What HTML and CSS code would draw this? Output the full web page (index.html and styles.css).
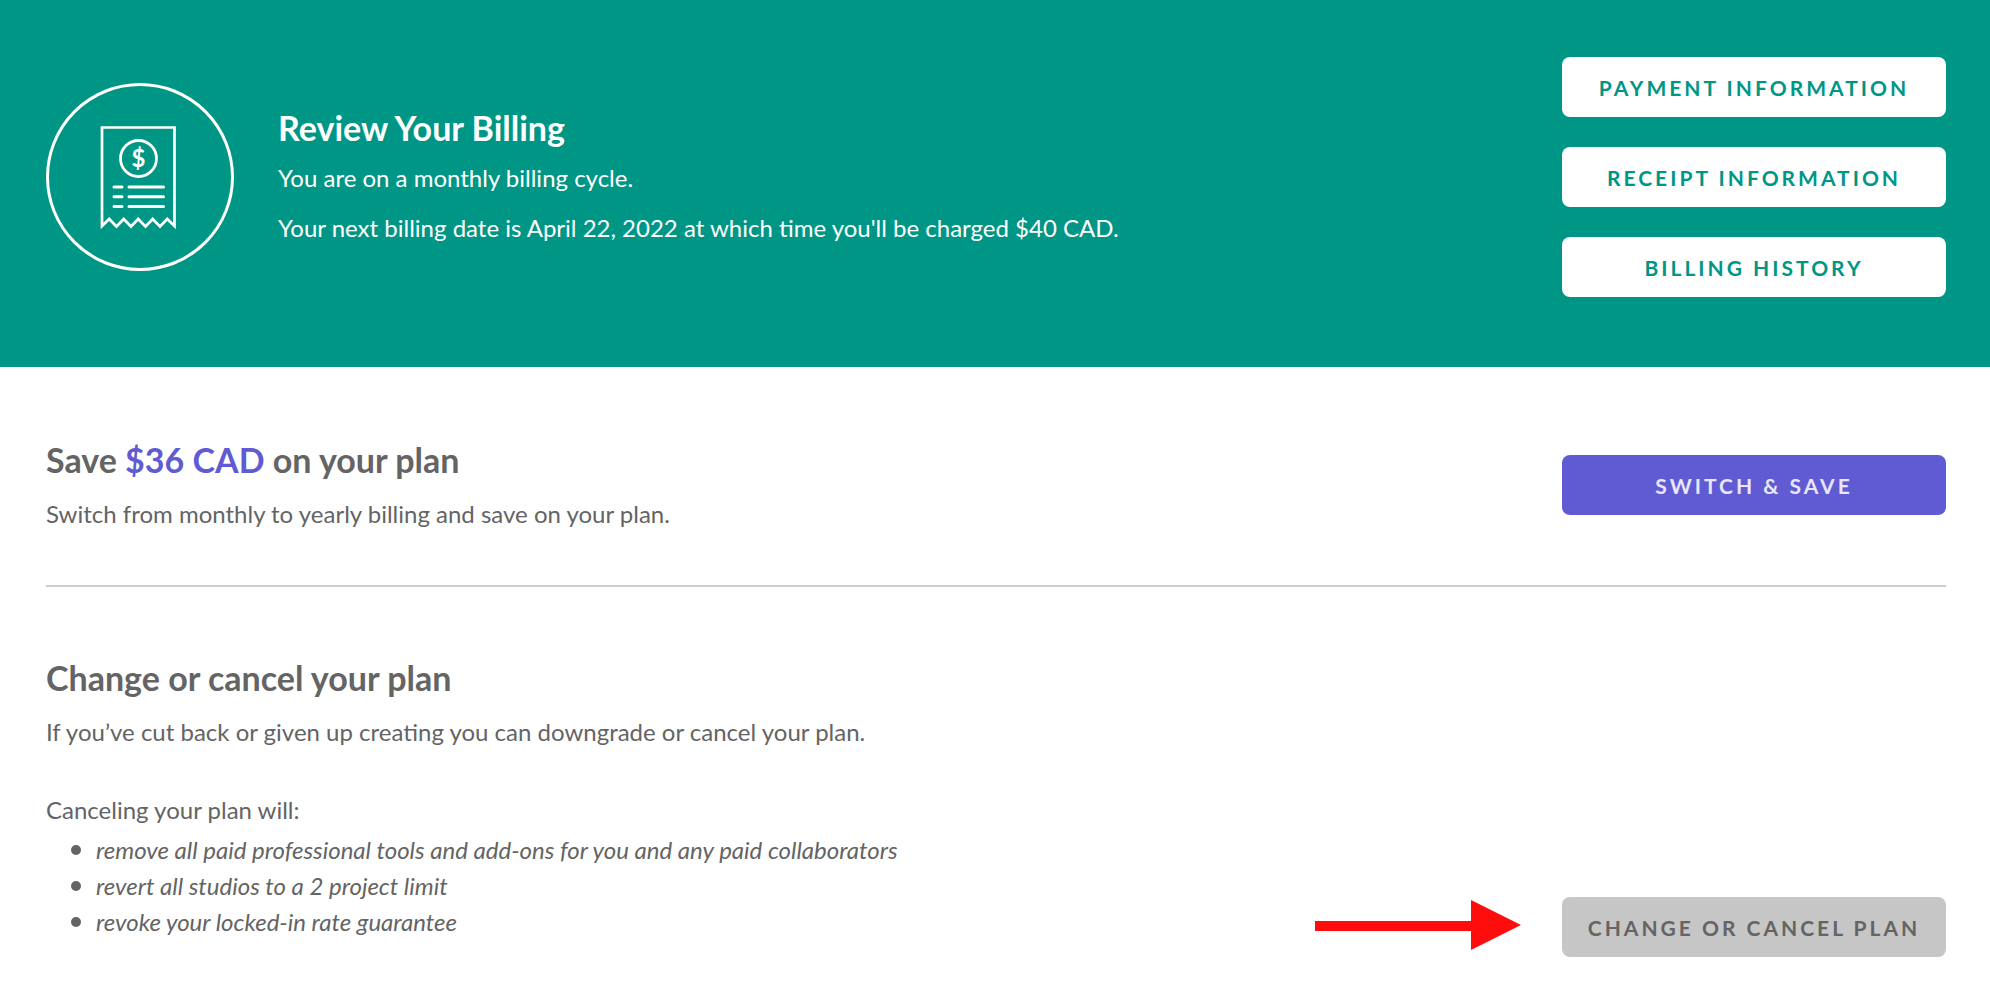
FILE: index.html
```html
<!DOCTYPE html>
<html lang="en">

<head>
  <meta charset="UTF-8" />
  <meta name="viewport" content="width=device-width, initial-scale=1.0" />
  <title>Billing</title>
  <link rel="stylesheet" href="styles.css">
</head>

<body>
  <header class="banner">
    <svg class="banner-icon" viewBox="0 0 188 188" fill="none" stroke="#fff" aria-hidden="true">
      <circle cx="94" cy="94" r="92.5" stroke-width="3" />
      <!-- receipt with torn edge -->
      <path d="M56 143V44.500H128.500V143L121.200 136L114 143.500L106.700 136L99.500 143.500L92.200 136L85 143.500L77.700 136L70.500 143.500L63.200 136Z" stroke-width="2.700" />
      <circle cx="92.500" cy="75.500" r="18" stroke-width="2.800" />
      <text class="dollar" x="92.500" y="84" text-anchor="middle">$</text>
      <path d="M68 104H76M83 104H117.500M68 113.700H76M83 113.700H117.500M68 123.500H76M83 123.500H117.500" stroke-width="3" stroke-linecap="round" />
    </svg>

    <div class="banner-text">
      <h1>Review Your Billing</h1>
      <p>You are on a monthly billing cycle.</p>
      <p>Your next billing date is April 22, 2022 at which time you'll be charged $40 CAD.</p>
    </div>

    <div class="banner-buttons">
      <button type="button" class="button">Payment Information</button>
      <button type="button" class="button">Receipt Information</button>
      <button type="button" class="button">Billing History</button>
    </div>
  </header>

  <main class="content">
    <section class="row">
      <div>
        <h2>Save <span class="amount">$36 CAD</span> on your plan</h2>
        <p>Switch from monthly to yearly billing and save on your plan.</p>
      </div>
      <button type="button" class="button button-primary">Switch &amp; Save</button>
    </section>

    <section class="row row-bottom">
      <div>
        <h2>Change or cancel your plan</h2>
        <p>If you’ve cut back or given up creating you can downgrade or cancel your plan.</p>
        <p class="list-title">Canceling your plan will:</p>
        <ul>
          <li>remove all paid professional tools and add-ons for you and any paid collaborators</li>
          <li>revert all studios to a 2 project limit</li>
          <li>revoke your locked-in rate guarantee</li>
        </ul>
      </div>
      <div class="cancel">
        <svg class="arrow" viewBox="0 0 206 54" aria-hidden="true">
          <path d="M0 21H156V0L206 25L156 50V31H0Z" fill="#ff0d0d" />
        </svg>
        <button type="button" class="button button-grey">Change or Cancel Plan</button>
      </div>
    </section>
  </main>
</body>

</html>
```

FILE: styles.css
```css
* {
  box-sizing: border-box;
}

body {
  font-family: Lato, sans-serif;
  font-size: 24px;
  line-height: 36px;
  margin: 0;
  color: #646464;
  background-color: white;
}

h1,
h2 {
  margin: 0;
  font-size: 34px;
  line-height: 44px;
  font-weight: bold;
}

p {
  margin: 14px 0 0;
}

.banner {
  display: flex;
  align-items: center;
  gap: 44px;
  padding: 57px 44px 70px 46px;
  background: #009685;
  color: white;
}

.banner-icon {
  width: 188px;
  flex-shrink: 0;
}

.dollar {
  font-size: 24px;
  font-weight: bold;
  fill: white;
  stroke: none;
}

.banner-text {
  flex: 1;
  padding-bottom: 2px;
}

.banner-text h1 {
  margin-bottom: 10px;
}

.banner-text h1 + p {
  margin-top: 0;
}

.banner-buttons {
  display: flex;
  flex-direction: column;
  gap: 30px;
}

.button {
  width: 384px;
  height: 60px;
  flex-shrink: 0;
  padding: 0;
  border: none;
  border-radius: 8px;
  background: white;
  color: #009685;
  font-family: inherit;
  font-size: 21px;
  font-weight: bold;
  letter-spacing: 3px;
  text-transform: uppercase;
  cursor: pointer;
}

.button-primary {
  background: #605bd2;
  color: #e9e5fa;
}

.button-grey {
  background: #c6c6c6;
  color: #646464;
}

.content {
  padding: 0 44px 0 46px;
}

.row {
  display: flex;
  align-items: center;
  justify-content: space-between;
  gap: 40px;
  padding: 71px 0 53px;
}

.row + .row {
  border-top: 2px solid #cdcdcd;
  padding: 69px 0 44px;
}

.row-bottom {
  align-items: flex-end;
}

.amount {
  color: #605bd2;
}

.list-title {
  margin-top: 42px;
}

ul {
  margin: 4px 0 17px;
  padding-left: 25px;
  list-style: none;
  font-style: italic;
}

li {
  display: flex;
  align-items: center;
  gap: 15px;
}

li::before {
  content: "";
  width: 10px;
  height: 10px;
  flex-shrink: 0;
  border-radius: 50%;
  background: #646464;
}

.cancel {
  display: flex;
  align-items: center;
  gap: 41px;
}

.arrow {
  width: 206px;
  flex-shrink: 0;
}
```
